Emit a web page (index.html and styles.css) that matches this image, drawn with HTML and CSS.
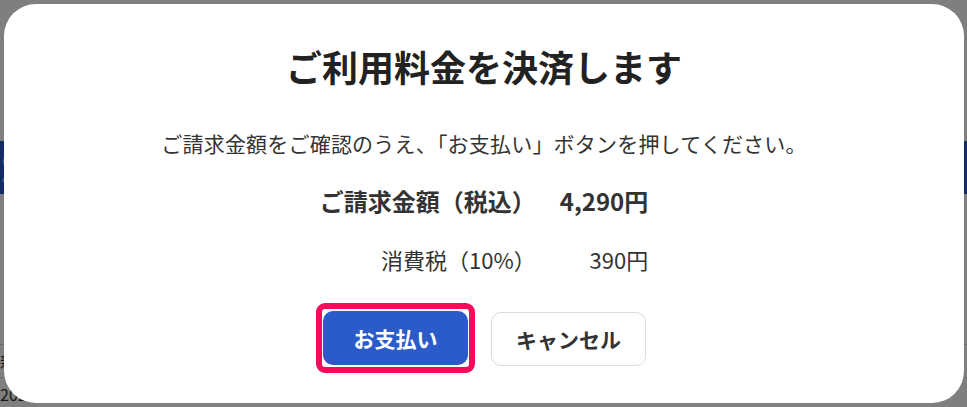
FILE: index.html
```html
<!DOCTYPE html>
<html lang="ja">
<head>
    <meta charset="UTF-8">
    <meta name="viewport" content="width=device-width, initial-scale=1.0">
    <title>ご利用料金の決済</title>
    <link rel="stylesheet" href="styles.css">
</head>
<body>

    <div class="page">
        <div class="page-banner">S</div>
        <div class="page-rows">
            <div class="page-row">新規</div>
            <div class="page-row">2022.11.01から2022.11.30まで</div>
        </div>
    </div>

    <div class="overlay">
        <div class="modal">
            <h2 class="modal-title">ご利用料金を決済します</h2>
            <p class="modal-lead">ご請求金額をご確認のうえ、「お支払い」ボタンを押してください。</p>

            <div class="bill">
                <div class="bill-label bill-total">ご請求金額（税込）</div>
                <div class="bill-value bill-total">4,290円</div>
                <div class="bill-label">消費税（10%）</div>
                <div class="bill-value">390円</div>
            </div>

            <div class="actions">
                <div class="highlight">
                    <button class="btn btn-pay">お支払い</button>
                </div>
                <button class="btn btn-cancel">キャンセル</button>
            </div>
        </div>
    </div>

</body>
</html>
```

FILE: styles.css
```css
body {
    margin: 0;
    font-family: "Noto Sans CJK JP", "Noto Sans", sans-serif;
    color: #333;
    background-color: #fff;
}
.page {
    padding-top: 141px;
}
.page-banner {
    height: 53px;
    background-color: #2658cc;
    color: #8fb0f0;
    font-size: 40px;
    font-weight: bold;
    line-height: 53px;
}
.page-rows {
    margin-top: 150px;
}
.page-row {
    border-top: 1px solid #d8d8d8;
    font-size: 16px;
    line-height: 24px;
    padding: 4px 0;
}
.overlay {
    position: fixed;
    top: 0;
    left: 0;
    right: 0;
    bottom: 0;
    background-color: rgba(0, 0, 0, 0.5);
    padding: 4px 3px 4px 4px;
    display: flex;
}
.modal {
    flex: 1;
    background: white;
    border-radius: 32px;
    padding: 35px 20px 0;
    text-align: center;
}
.modal-title {
    margin: 0;
    font-size: 36px;
    line-height: 54px;
    font-weight: bold;
    color: #222;
}
.modal-lead {
    margin: 35px 0 0;
    font-size: 21px;
    line-height: 30px;
    letter-spacing: 0.2px;
}
.bill {
    display: inline-grid;
    grid-template-columns: auto auto;
    column-gap: 24px;
    row-gap: 24px;
    margin-top: 26px;
    text-align: right;
}
.bill-label, .bill-value {
    font-size: 22px;
    line-height: 34px;
}
.bill-total {
    font-size: 24px;
    font-weight: bold;
}
.actions {
    display: flex;
    justify-content: center;
    gap: 16px;
    margin-top: 27px;
    padding-right: 6px;
}
.highlight {
    border: 6px solid #f50a5c;
    border-radius: 9px;
    padding: 2px 1px;
    background: white;
}
.btn {
    height: 54px;
    border-radius: 10px;
    font-family: inherit;
    font-size: 21px;
    font-weight: bold;
    cursor: pointer;
}
.btn-pay {
    width: 145px;
    background-color: #2a5bc9;
    color: white;
    border: none;
    display: block;
}
.btn-cancel {
    width: 155px;
    margin-top: 9px;
    background: white;
    color: #333;
    border: 1px solid #dcdcdc;
}
```
